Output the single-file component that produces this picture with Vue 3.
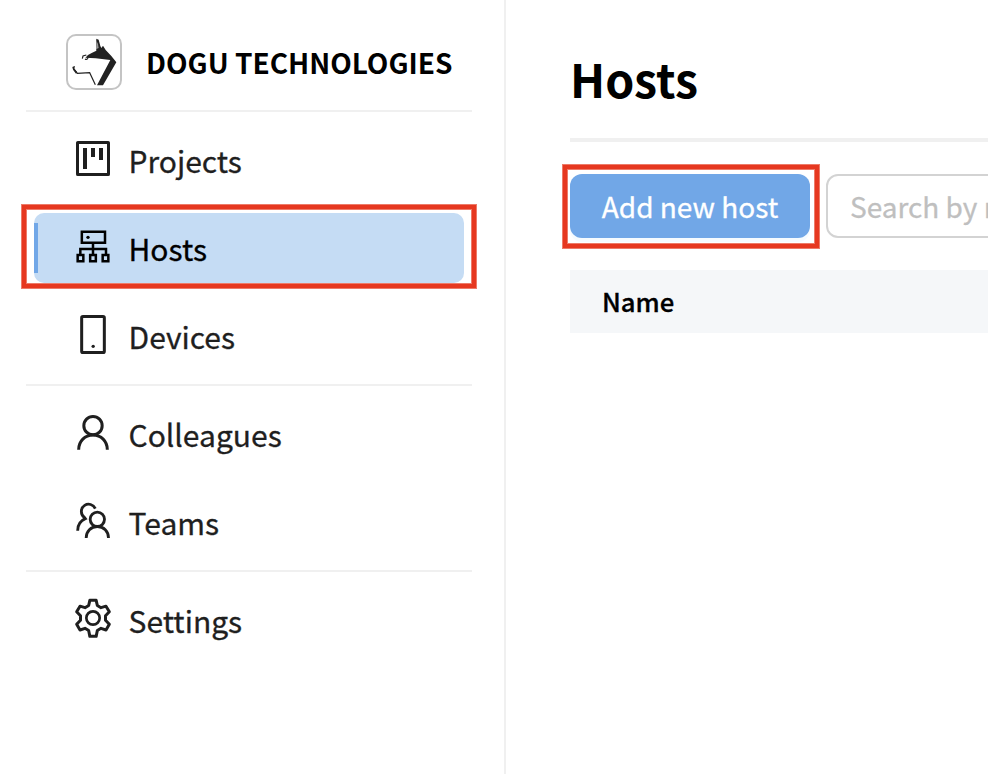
<script setup>
const groups = [
  [
    { name: 'Projects', box: '21 30 120 120' },
    { name: 'Hosts', box: '171 84 120 120', active: true },
    { name: 'Devices', box: '21 33 120 120' },
  ],
  [
    { name: 'Colleagues', box: '21 27 120 120' },
    { name: 'Teams', box: '21 36 120 120' },
  ],
  [{ name: 'Settings', box: '21 30 120 120' }],
]
</script>

<template>
  <div class="page">
    <aside class="sidebar">
      <header class="org">
        <svg class="logo" viewBox="30 30 168 168">
          <rect x="33" y="33" width="162" height="162" rx="27" fill="#fff" stroke="#c4c4c4" stroke-width="6" />
          <path d="M88 101L96 93L107 87L121 80L120 66L121 44L128 47L133 66L136 72L141 65L149 78L166 96L181 115L141 184H123L163 108L119 103Z" fill="#222" />
          <path d="M121 50L120 76L128 72L126 60Z" fill="#999" />
          <path d="M79 104L81 96L91 93M87 105C93 109 98 103 95 98M50 130L64 148L101 146L118 182" fill="none" stroke="#222" stroke-width="3.500" />
          <path d="M50 128L57 126L55 134L64 145L60 149L51 137Z" fill="#222" />
        </svg>
        <span class="org-name">DOGU TECHNOLOGIES</span>
      </header>
      <nav v-for="(group, i) in groups" :key="i" class="group">
        <a v-for="item in group" :key="item.name" class="item" :class="{ active: item.active }">
          <svg class="icon" :viewBox="item.box">
            <template v-if="item.name === 'Projects'">
              <rect x="34.5" y="37.5" width="93" height="96" rx="1" stroke-width="9" />
              <path d="M57 54V117M81 54V81M105 54V90" stroke-width="12" />
            </template>
            <template v-else-if="item.name === 'Hosts'">
              <path d="M197.500 95.500H267V128H197.500ZM231 128V165M193 165V147H270V165" stroke-width="7.500" />
              <path d="M185 165H202V184H185ZM222.500 165H239.500V184H222.500ZM260 165H277V184H260Z" stroke-width="7.500" />
              <circle class="dot" cx="216" cy="112" r="5" />
            </template>
            <template v-else-if="item.name === 'Devices'">
              <rect x="47" y="34.500" width="68" height="108" rx="4" stroke-width="9" />
              <circle class="dot" cx="81.500" cy="124" r="5" />
            </template>
            <template v-else-if="item.name === 'Colleagues'">
              <circle cx="81" cy="62" r="27.500" stroke-width="9" />
              <path d="M38 134C38 108 57 90 81 90S124 108 124 134" stroke-width="9" />
            </template>
            <template v-else-if="item.name === 'Teams'">
              <circle cx="94" cy="88" r="21.500" stroke-width="8.500" />
              <path d="M60.500 144C60.500 124 75 109.500 94 109.500S127.500 124 127.500 144" stroke-width="8.500" />
              <path d="M88 56C82 43 67 39 56 46C43 54 43 73 55 82L58 86C44 92 35 105 35 122" stroke-width="8.500" />
            </template>
            <template v-else>
              <circle cx="81" cy="84" r="20" stroke-width="8" />
              <path d="M71.500 31H90.500L94 46.500L105 53L120 48.500L130 65L118.500 77V91L130 103L120 120L105 115L94 121.500L90.500 139H71.500L68 121.500L57 115L42 120L32 103L43.500 91V77L32 65L42 48.500L57 53L68 46.500Z" stroke-width="9" stroke-linejoin="round" />
            </template>
          </svg>
          <span>{{ item.name }}</span>
        </a>
      </nav>
    </aside>
    <main class="content">
      <h1>Hosts</h1>
      <div class="toolbar">
        <button class="add">Add new host</button>
        <div class="search">Search by name</div>
      </div>
      <div class="table-head">Name</div>
    </main>
  </div>
</template>

<style>
body {
  margin: 0;
  overflow: hidden;
}
</style>

<style scoped>
.page {
  display: flex;
  width: 988px;
  height: 774px;
  overflow: hidden;
  background: #fff;
  color: #000;
  font-family: "Noto Sans CJK KR", "Noto Sans", sans-serif;
}
.sidebar {
  box-sizing: border-box;
  flex: 0 0 506px;
  padding: 34px 32px 0 26px;
  border-right: 2px solid #f0f0f0;
}
.org {
  display: flex;
  align-items: center;
  gap: 24px;
  height: 56px;
  padding: 0 0 20px 40px;
}
.logo {
  width: 56px;
  height: 56px;
}
.org-name {
  font-size: 28px;
  font-weight: 700;
  line-height: 40px;
  white-space: nowrap;
}
.group {
  display: flex;
  flex-direction: column;
  gap: 18px;
  padding: 13px 8px;
  border-top: 2px solid #f0f0f0;
}
.item {
  position: relative;
  display: flex;
  align-items: center;
  gap: 15.5px;
  height: 70px;
  padding-left: 39px;
  border-radius: 10px;
  color: #1f1f1f;
  font-size: 30px;
  line-height: 48px;
  -webkit-text-stroke: 0.3px currentColor;
}
.active {
  background: #c5dcf4;
  color: #000;
}
.active::before {
  content: "";
  position: absolute;
  left: 0;
  top: 10px;
  width: 4px;
  height: 50px;
  background: #71a7e7;
}
.active::after,
.add::after {
  content: "";
  position: absolute;
  inset: -8px -12px -5px;
  border: 4px solid #e63820;
  box-shadow: 0 0 0 1px #ed7b69, inset 0 0 0 1px #ed7b69;
}
.icon {
  flex: none;
  width: 40px;
  height: 40px;
  overflow: visible;
  fill: none;
  stroke: currentColor;
}
.dot {
  fill: currentColor;
  stroke: none;
}
.content {
  flex: 1;
  min-width: 0;
  padding: 44px 0 0 64px;
}
h1 {
  margin: 0;
  height: 94px;
  border-bottom: 4px solid #f0f0f0;
  font-size: 46.5px;
  font-weight: 700;
  line-height: 68px;
}
.toolbar {
  display: flex;
  gap: 16px;
  padding: 32px 0;
}
.add {
  position: relative;
  flex: none;
  width: 240px;
  height: 64px;
  padding: 0;
  border: 0;
  border-radius: 12px;
  background: #71a7e7;
  box-shadow: 0 4px 0 rgba(5, 145, 255, 0.04);
  color: #fff;
  font: inherit;
  font-size: 28px;
  line-height: 64px;
  -webkit-text-stroke: 0.3px currentColor;
}
.add::after {
  inset: -9px -9px -10px -7px;
}
.search {
  box-sizing: border-box;
  flex: 0 0 400px;
  height: 64px;
  padding-left: 22px;
  border: 2px solid #d3d3d3;
  border-radius: 12px;
  color: #bfbfbf;
  font-size: 28px;
  line-height: 60px;
  -webkit-text-stroke: 0.3px currentColor;
}
.table-head {
  height: 63px;
  padding-left: 32px;
  background: #f5f7f9;
  font-size: 25.7px;
  font-weight: 500;
  line-height: 62px;
  -webkit-text-stroke: 0.3px currentColor;
}
</style>
